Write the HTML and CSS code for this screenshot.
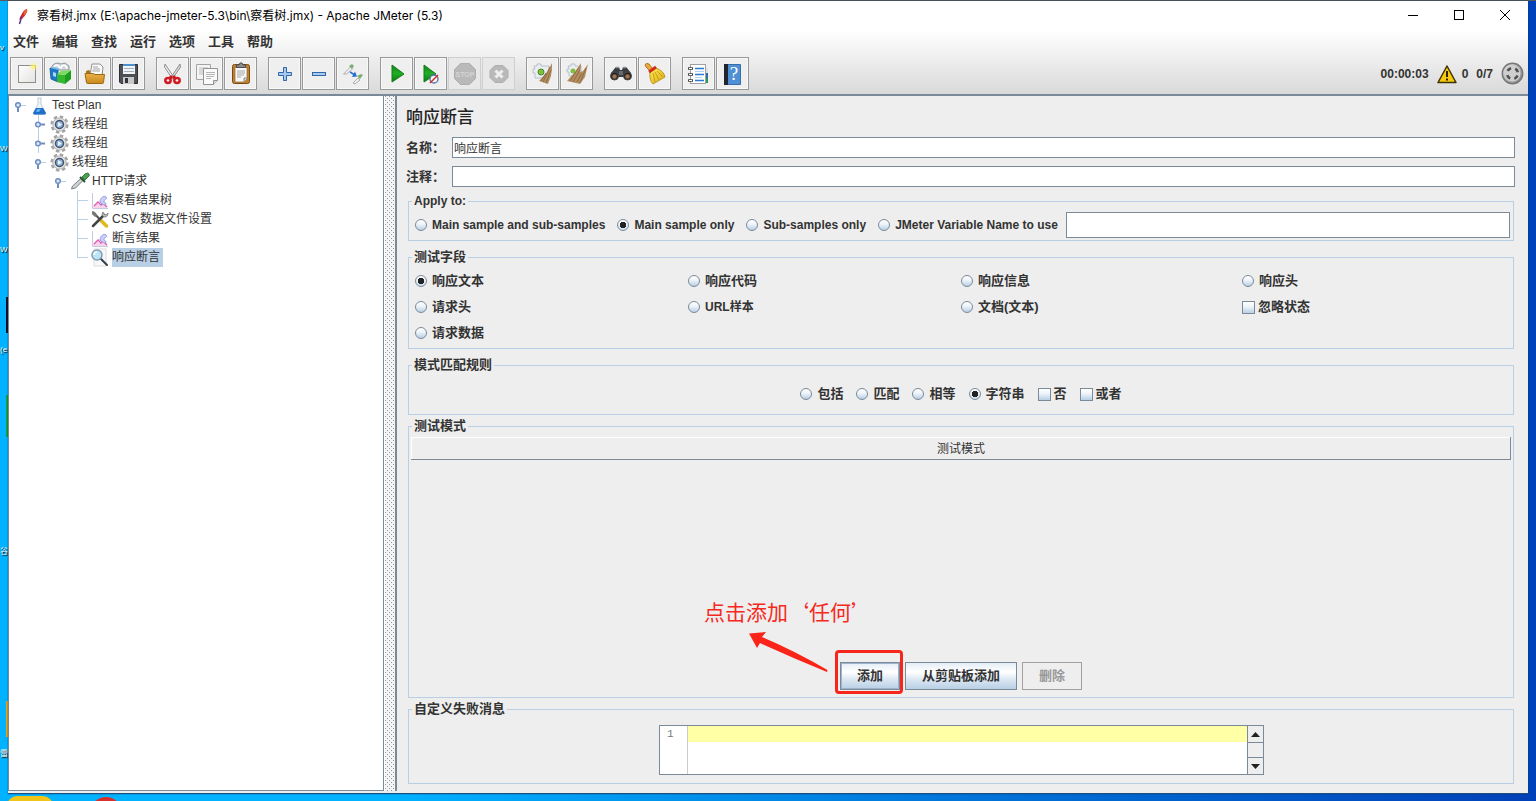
FILE: index.html
```html
<!DOCTYPE html>
<html lang="zh-CN">
<head>
<meta charset="utf-8">
<title>察看树.jmx - Apache JMeter (5.3)</title>
<link rel="stylesheet" href="styles.css">
</head>
<body>
<svg class="defs" width="0" height="0" aria-hidden="true">
  <defs>
    <linearGradient id="green" x1="0" y1="0" x2="0" y2="1"><stop offset="0" stop-color="#12871a"/><stop offset=".5" stop-color="#1fae25"/><stop offset="1" stop-color="#0b7a12"/></linearGradient>
    <linearGradient id="gold" x1="0" y1="0" x2="0" y2="1"><stop offset="0" stop-color="#eab04a"/><stop offset="1" stop-color="#c98a1c"/></linearGradient>
    <linearGradient id="paper" x1="0" y1="0" x2="1" y2="1"><stop offset="0" stop-color="#ffffff"/><stop offset="1" stop-color="#e2e2e0"/></linearGradient>
    <radialGradient id="glow"><stop offset="0" stop-color="#fff04a"/><stop offset="1" stop-color="#fff8b0" stop-opacity="0"/></radialGradient>
    <linearGradient id="broom" x1="0" y1="0" x2="1" y2="1"><stop offset="0" stop-color="#ffee55"/><stop offset="1" stop-color="#d9a514"/></linearGradient>
    <linearGradient id="steel" x1="0" y1="0" x2="1" y2="1"><stop offset="0" stop-color="#e8e8e8"/><stop offset="1" stop-color="#7d7d7d"/></linearGradient>
    <symbol id="i-open" viewBox="0 0 20 19"><path d="M8 10v6" stroke="#6f8fc4" stroke-width="2"/><path d="M10 9.500h6" stroke="#b8cfe5"/><circle cx="8" cy="9" r="2.300" fill="#dfe9f6" stroke="#6f8fc4" stroke-width="1.500"/></symbol>
    <symbol id="i-shut" viewBox="0 0 20 19"><path d="M9 9.500h6" stroke="#6f8fc4" stroke-width="2"/><circle cx="8" cy="9.500" r="2.300" fill="#dfe9f6" stroke="#6f8fc4" stroke-width="1.500"/></symbol>
    <symbol id="i-gear" viewBox="0 0 20 19">
      <circle cx="9.500" cy="9.500" r="7.800" fill="none" stroke="#a3a3a3" stroke-width="2.600" stroke-dasharray="3.500 2.626"/>
      <circle cx="9.500" cy="9.500" r="6.600" fill="#e2e2e2" stroke="#b5b5b5"/>
      <circle cx="9.500" cy="9.500" r="4" fill="#8fb2da" stroke="#40536f" stroke-width="1.500"/>
      <path d="M8 7l4 2.500-4 2.500z" fill="#e9f2fc"/>
    </symbol>
    <symbol id="i-graph" viewBox="0 0 20 19"><path d="M2.500 2v15.500H18" fill="none" stroke="#c3cbe2"/><path d="M3 17v-2l4-3 3 2 3-2 4 4v1z" fill="#f9d3ec"/><path d="M4 15l4-4 3 3 2-2 4 4" fill="none" stroke="#e05cae" stroke-width="1.300"/><path d="M10 11c0-4 4-7 6-5s-1 2-2 4 2 1 2 3-3 1-6-2z" fill="#c9d0fa" stroke="#9a9ce2"/></symbol>
    <symbol id="i-tools" viewBox="0 0 20 19"><path d="M3 2l12 13" stroke="#555" stroke-width="2"/><path d="M2 1l4 2 1 3-2 1-3-3z" fill="#777"/><path d="M11.500 11l5 5" stroke="#e0b91c" stroke-width="3.500" stroke-linecap="round"/><path d="M3 16L14 5" stroke="#444" stroke-width="2.500" stroke-linecap="round"/><path d="M13 2c-2 3 0 5 2 5s3-2 3-4l-2 2-2-1z" fill="#bbb" stroke="#666" stroke-width=".7"/></symbol>
  </defs>
</svg>

<div class="desktop" aria-hidden="true">
  <span class="peek peek-v">v</span><span class="peek peek-w1">W</span><span class="peek peek-w2">W</span>
  <span class="peek peek-ie">(e</span><span class="peek peek-gu">谷</span><span class="peek peek-lei">雷</span>
  <i class="chip chip-black"></i><i class="chip chip-green"></i><i class="chip chip-orange"></i><i class="chip chip-yellow"></i><i class="chip chip-red"></i>
</div>

<div class="window">
  <header class="titlebar">
    <svg class="app-icon" width="16" height="18" viewBox="0 0 16 18"><path d="M3.500 17l1.500-5" stroke="#55357a" stroke-width="1.500"/><path d="M4 13C4 9 7 3 11 2c1 3-3 9-7 11z" fill="#d22c33"/><path d="M11 2c1 3-1 5-3 6L7.500 5z" fill="#e8662e"/><path d="M3.500 13c0-2 .5-3 1.500-4l2 2z" fill="#8b2468"/></svg>
    <h1 class="window-title">察看树.jmx (E:\apache-jmeter-5.3\bin\察看树.jmx) - Apache JMeter (5.3)</h1>
    <button class="win-btn" aria-label="最小化"><svg width="12" height="12" viewBox="0 0 12 12"><path d="M1 5.500h10" stroke="#000"/></svg></button>
    <button class="win-btn" aria-label="最大化"><svg width="12" height="12" viewBox="0 0 12 12"><rect x="1.500" y=".5" width="9" height="9" fill="none" stroke="#000"/></svg></button>
    <button class="win-btn" aria-label="关闭"><svg width="12" height="12" viewBox="0 0 12 12"><path d="M1 0l10 10M11 0L1 10" stroke="#000"/></svg></button>
  </header>

  <div class="bars">
    <nav class="menubar">
      <button>文件</button><button>编辑</button><button>查找</button><button>运行</button><button>选项</button><button>工具</button><button>帮助</button>
    </nav>
    <div class="toolbar">
      <div class="group">
        <button aria-label="新建"><svg viewBox="0 0 31 31"><rect x="7.500" y="7.500" width="17" height="17" fill="url(#paper)" stroke="#8e8e8a"/><circle cx="22.500" cy="8.500" r="5" fill="url(#glow)"/></svg></button>
        <button aria-label="模板"><svg viewBox="0 0 31 31"><path d="M7 12V8l2-2 4-1 3 1 4-1 4 3v4z" fill="#d3dade" stroke="#8d999e"/><path d="M9 10c1-4 5-4 6 1M16 11c0-5 5-5 6 0" stroke="#fff" fill="none" stroke-width="1.500"/><path d="M5 10l8 2v12l-7-3z" fill="#1c79c8" stroke="#0e5291" stroke-width=".8"/><path d="M5 10l4-1 7 2-3 1z" fill="#6fb9ee"/><path d="M8 14l3 1v4l-3-1z" fill="#a9d8f8"/><path d="M12 16l8 1v9l-8-2z" fill="#33b830"/><path d="M20 17l6-5v9l-6 5z" fill="#1d9c20"/><path d="M12 16l4-3 10-1-6 5z" fill="#7bdc5c"/></svg></button>
        <button aria-label="打开"><svg viewBox="0 0 31 31"><path d="M7 25V13l3-1 2 2h12v11z" fill="#a9731d"/><path d="M11 17L13 6h8l3 3-1 9z" fill="#fafafa" stroke="#8f8f8f"/><path d="M14 9h5M14 11h7M13 13h8" stroke="#a5a5a5"/><path d="M6 15.500h8l2 1h9.500l-1 8q0 1-1 1h-15q-1 0-1-1z" fill="url(#gold)" stroke="#9c6a14"/></svg></button>
        <button aria-label="保存"><svg viewBox="0 0 31 31"><path d="M6.500 6.500h18v19H8l-1.500-1.500z" fill="#4d5055" stroke="#2d2f33"/><rect x="10" y="6" width="12" height="10" fill="#f2f5f8"/><path d="M10 7h12" stroke="#4e90cd" stroke-width="2"/><path d="M11 10.500h10M11 13.500h10" stroke="#a3b1bd"/><rect x="10" y="19" width="11" height="7" fill="#c9c9c9"/><rect x="12" y="20" width="3" height="5" fill="#33353a"/></svg></button>
      </div>
      <div class="group">
        <button aria-label="剪切"><svg viewBox="0 0 31 31"><path d="M8 6l9.500 14-2 1L7.500 9z" fill="#ededed" stroke="#858585" stroke-width=".9"/><path d="M23 6l-9.500 14 2 1L23.500 9z" fill="#d9d9d9" stroke="#858585" stroke-width=".9"/><path d="M15 18l-3 3M16 18l3 3" stroke="#c71c22" stroke-width="3"/><ellipse cx="11" cy="22.500" rx="2.700" ry="2.400" fill="none" stroke="#d01b22" stroke-width="2.500"/><ellipse cx="20" cy="22.500" rx="2.700" ry="2.400" fill="none" stroke="#d01b22" stroke-width="2.500"/></svg></button>
        <button aria-label="复制"><svg viewBox="0 0 31 31"><path d="M5.500 6.500h14v15h-14z" fill="#f4f4f4" stroke="#a4a4a4"/><path d="M8 10h9M8 12h9M8 14h4M8 16h4" stroke="#bdbdbd"/><path d="M12.500 10.500h14v12l-4 4h-10z" fill="#fafafa" stroke="#929292"/><path d="M15 14.500h9M15 16.500h9M15 18.500h8M15 20.500h5" stroke="#b5b5b5"/><path d="M22.500 26.500v-4h4" fill="#ddd" stroke="#929292"/></svg></button>
        <button aria-label="粘贴"><svg viewBox="0 0 31 31"><rect x="7.500" y="6.500" width="17" height="19" rx="2" fill="#c1812c" stroke="#7d4b10"/><path d="M10 9.500h12v11l-3 3.500h-9z" fill="#f8f8f8" stroke="#8b6b3b" stroke-width=".7"/><path d="M12 13h8M12 15h8M12 17h7M12 19h4" stroke="#a5a5a5"/><path d="M11.500 9.500V7h2.500l1-2h2l1 2h2.500v2.500z" fill="#8c8e91" stroke="#4d4e50"/><path d="M19 24v-4h3" fill="#ddd" stroke="#888"/></svg></button>
      </div>
      <div class="group">
        <button aria-label="展开"><svg viewBox="0 0 31 31"><path d="M14.500 9.500h3v5h5v3h-5v5h-3v-5h-5v-3h5z" fill="#a9c9ee" stroke="#2e66aa"/></svg></button>
        <button aria-label="折叠"><svg viewBox="0 0 31 31"><rect x="9.500" y="14.500" width="13" height="3" fill="#a9c9ee" stroke="#2e66aa"/></svg></button>
        <button aria-label="切换"><svg viewBox="0 0 31 31"><path d="M6.500 16l7-7 2 2-6 5z" fill="#f2f2f2" stroke="#adadad"/><path d="M12 8l3-2 2 2-2 3z" fill="#7fae74"/><path d="M16 25l5-5 2 2-5 4z" fill="#f2f2f2" stroke="#adadad"/><path d="M20 18l4-2 2 1-3 4z" fill="#7fae74"/><path d="M13 14l5 3" stroke="#246fd4" stroke-width="1.500"/><path d="M15 19l5-.5-2-5z" fill="#246fd4"/></svg></button>
      </div>
      <div class="group">
        <button aria-label="启动"><svg viewBox="0 0 31 31"><path d="M11 7l12 9-12 8z" fill="url(#green)" stroke="#157a1c"/></svg></button>
        <button aria-label="不停顿开始"><svg viewBox="0 0 31 31"><path d="M9 7l12 9-12 8z" fill="url(#green)" stroke="#157a1c"/><circle cx="19" cy="21" r="4" fill="#f6f6f6" stroke="#596f9e" stroke-width="1.300"/><path d="M15 25l8-8" stroke="#d12a22" stroke-width="1.500"/></svg></button>
        <button aria-label="停止" disabled><svg viewBox="0 0 31 31"><path d="M11.500 5.500h9l6 6v9l-6 6h-9l-6-6v-9z" fill="#b9b9b9" stroke="#aeaeae"/><text x="16" y="19" text-anchor="middle" class="stop-text">STOP</text></svg></button>
        <button aria-label="关闭" disabled><svg viewBox="0 0 31 31"><path d="M12 7.500h8l5 5v7l-5 5h-8l-5-5v-7z" fill="#b9b9b9" stroke="#aeaeae"/><path d="M12.500 12.500l7 7M19.500 12.500l-7 7" stroke="#eee" stroke-width="3"/></svg></button>
      </div>
      <div class="group">
        <button aria-label="清除"><svg viewBox="0 0 31 31"><path d="M7 8h3V6h4v2h8v12H8v-5H6v-4h2z" fill="#e9edf0" stroke="#b9c1c8"/><circle cx="14" cy="14" r="3" fill="#7dc142" stroke="#4a8a24"/><path d="M25 5l-5 9-8 9 9 3 3-8 1-7z" fill="#b48d61"/><path d="M23 9l-7 15M24 12l-5 13M19 15l-5 8" stroke="#80623e" stroke-width=".8"/></svg></button>
        <button aria-label="清除全部"><svg viewBox="0 0 31 31"><path d="M7 8h3V6h4v2h6v10H8v-4H6v-3h2z" fill="#e9edf0" stroke="#b9c1c8"/><circle cx="12" cy="13" r="2.500" fill="#7dc142"/><path d="M20 5l-6 9-8 9 13 3 5-7 3-13-5 7-3 1 1-5z" fill="#b48d61"/><path d="M18 9L9 23M19 12l-7 12M25 10l-6 15M21 15l-5 9" stroke="#80623e" stroke-width=".8"/></svg></button>
      </div>
      <div class="group">
        <button aria-label="查找"><svg viewBox="0 0 31 31"><path d="M6 15l4-5 1-1h3l1 3h2l1-3h3l1 1 4 5v4H6z" fill="#3a3d40"/><path d="M11 9.500h3M18 9.500h3" stroke="#8e9599" stroke-width="1.500"/><circle cx="9.500" cy="18" r="4" fill="#222" stroke="#4a4a4a"/><circle cx="22.500" cy="18" r="4" fill="#222" stroke="#4a4a4a"/><circle cx="9.500" cy="18.500" r="2.300" fill="#a3714b"/><circle cx="22.500" cy="18.500" r="2.300" fill="#a3714b"/><rect x="14" y="13" width="4" height="4" fill="#666b6f"/></svg></button>
        <button aria-label="重置查找"><svg viewBox="0 0 31 31"><path d="M6 7q1-3 4-1l4 5-3 2-4-4z" fill="#e8a83b" stroke="#a36a13" stroke-width=".8"/><path d="M11 14l6-4q8 3 9 9L14 26q-4-4-3-12z" fill="url(#broom)" stroke="#b08a11" stroke-width=".8"/><path d="M14 15l2 9M16 14l4 8M18 13l6 6" stroke="#c59b14" stroke-width=".9"/><path d="M10 14l7-5" stroke="#cf2a1d" stroke-width="3"/></svg></button>
      </div>
      <div class="group">
        <button aria-label="函数助手"><svg viewBox="0 0 31 31"><path d="M21 10h4v15h-4z" fill="#d9e2ea"/><path d="M22 15h3v5h-3z" fill="#376aa8"/><path d="M22 20h3v5h-3z" fill="#26994b"/><rect x="7.500" y="6.500" width="15" height="19" fill="#fdfdfd" stroke="#a0a0a0"/><path d="M12 10.500h9M12 16.500h9M12 22.500h9" stroke="#2a7bd0" stroke-width="1.500"/><path d="M12 13.500h9M12 19.500h7" stroke="#b7d1ec"/><path d="M5 10.500h5M5 16.500h5M5 22.500h5" stroke="#444" stroke-width="2.500"/><path d="M6 10.500h3M6 16.500h3M6 22.500h3" stroke="#fff"/></svg></button>
        <button aria-label="帮助"><svg viewBox="0 0 31 31"><path d="M7.500 6.500h16v20h-16z" fill="#4f8fd6" stroke="#3a6ea9"/><path d="M7 6h4v21H7z" fill="#20262e"/><text x="17" y="22" text-anchor="middle" class="help-text">?</text></svg></button>
      </div>
      <div class="status">
        <span class="time">00:00:03</span>
        <svg width="20" height="20" viewBox="0 0 20 20"><path d="M10 2L1 18.500h18z" fill="#f6c90e" stroke="#3d3203" stroke-width="1.500" stroke-linejoin="round"/><path d="M10 7v6M10 14.500v2" stroke="#2a2200" stroke-width="2"/></svg>
        <span class="errors">0</span>
        <span class="threads">0/7</span>
        <svg width="23" height="23" viewBox="0 0 23 23"><circle cx="11.500" cy="11.500" r="10.200" fill="url(#steel)" stroke="#777" stroke-width="1.500"/><circle cx="11.500" cy="11.500" r="8" fill="#cfcfcf"/><circle cx="11.500" cy="11.500" r="5.500" fill="none" stroke="#505050" stroke-width="2.600" stroke-dasharray="4.300 4.340" stroke-dashoffset="-2.200"/></svg>
      </div>
    </div>
  </div>

  <div class="body">
    <ul class="tree">
      <li class="lv0"><svg class="handle"><use href="#i-open"/></svg><svg class="icon" viewBox="0 0 20 19"><path d="M7.500 2h4M8 2v6L3.500 17q0 1.500 1.500 1.500h9q1.500 0 1.500-1.500L11 8V2" fill="#eef4fa" stroke="#c0cdd9"/><path d="M6 12h7l3 5q0 1.500-2 1.500H5q-2 0-2-1.500z" fill="#1d6fc9"/><path d="M7 13h4l-2 3H6z" fill="#64abf0"/></svg><span>Test Plan</span></li>
      <li class="lv1 trunk"><svg class="handle"><use href="#i-shut"/></svg><svg class="icon"><use href="#i-gear"/></svg><span>线程组</span></li>
      <li class="lv1 trunk"><svg class="handle"><use href="#i-shut"/></svg><svg class="icon"><use href="#i-gear"/></svg><span>线程组</span></li>
      <li class="lv1"><svg class="handle"><use href="#i-open"/></svg><svg class="icon"><use href="#i-gear"/></svg><span>线程组</span></li>
      <li class="lv2"><svg class="handle"><use href="#i-open"/></svg><svg class="icon" viewBox="0 0 20 19"><path d="M1.500 17l1-3 9-8 2 2-8 8z" fill="#cdd2d4" stroke="#7b8184"/><path d="M10 5l5 5" stroke="#25522a" stroke-width="2"/><path d="M12 5l3-3q3-2 4 0 1 2-1 3l-3 3z" fill="#4c9f55" stroke="#3a7a40"/></svg><span>HTTP请求</span></li>
      <li class="lv3"><i class="branch"></i><svg class="icon"><use href="#i-graph"/></svg><span>察看结果树</span></li>
      <li class="lv3"><i class="branch"></i><svg class="icon"><use href="#i-tools"/></svg><span>CSV 数据文件设置</span></li>
      <li class="lv3"><i class="branch"></i><svg class="icon"><use href="#i-graph"/></svg><span>断言结果</span></li>
      <li class="lv3"><i class="branch last"></i><svg class="icon" viewBox="0 0 20 19"><path d="M4 1h12v17H4z" fill="#f8f8f8" stroke="#dcdcdc"/><path d="M11 11l6 6" stroke="#34404b" stroke-width="2" stroke-linecap="round"/><circle cx="7" cy="7" r="5" fill="#bfe4f7" stroke="#7f9db3" stroke-width="1.500"/><path d="M4 7q0-3 3-3" stroke="#fff" stroke-width="1.500" fill="none"/></svg><span class="selected">响应断言</span></li>
    </ul>
    <div class="splitter"></div>

    <main class="panel">
      <h2>响应断言</h2>
      <div class="row"><label for="name">名称：</label><input id="name" type="text" value="响应断言"></div>
      <div class="row"><label for="comment">注释：</label><input id="comment" type="text"></div>

      <fieldset class="apply">
        <legend class="latin">Apply to:</legend>
        <div class="choices latin">
          <label><input type="radio" name="apply">Main sample and sub-samples</label>
          <label><input type="radio" name="apply" checked>Main sample only</label>
          <label><input type="radio" name="apply">Sub-samples only</label>
          <label><input type="radio" name="apply">JMeter Variable Name to use</label>
          <input class="variable" type="text" aria-label="JMeter Variable Name">
        </div>
      </fieldset>

      <fieldset class="fields">
        <legend>测试字段</legend>
        <div class="field-grid">
          <label><input type="radio" name="field" checked>响应文本</label>
          <label><input type="radio" name="field">响应代码</label>
          <label><input type="radio" name="field">响应信息</label>
          <label><input type="radio" name="field">响应头</label>
          <label><input type="radio" name="field">请求头</label>
          <label class="latin"><input type="radio" name="field">URL样本</label>
          <label><input type="radio" name="field">文档(文本)</label>
          <label><input type="checkbox">忽略状态</label>
          <label><input type="radio" name="field">请求数据</label>
        </div>
      </fieldset>

      <fieldset class="rules">
        <legend>模式匹配规则</legend>
        <div class="choices centered">
          <label><input type="radio" name="rule">包括</label>
          <label><input type="radio" name="rule">匹配</label>
          <label><input type="radio" name="rule">相等</label>
          <label><input type="radio" name="rule" checked>字符串</label>
          <label><input type="checkbox">否</label>
          <label><input type="checkbox">或者</label>
        </div>
      </fieldset>

      <fieldset class="patterns">
        <legend>测试模式</legend>
        <div class="patterns-inner">
          <table><thead><tr><th>测试模式</th></tr></thead></table>
          <div class="actions">
            <div class="marked">
              <button class="btn focus">添加</button>
              <div class="note">
                <span>点击添加‘任何’</span>
                <svg width="80" height="42" viewBox="0 0 80 42"><path d="M1 1.500L18 0l-4 5q33 14 65.500 33l-.5 2Q45 26 12 11l-3 5z" fill="#fb2418"/></svg>
              </div>
            </div>
            <button class="btn">从剪贴板添加</button>
            <button class="btn" disabled>删除</button>
          </div>
        </div>
      </fieldset>

      <fieldset class="message">
        <legend>自定义失败消息</legend>
        <div class="editor">
          <span class="gutter">1</span>
          <textarea aria-label="自定义失败消息"></textarea>
          <div class="scroll">
            <button aria-label="向上"><svg width="9" height="5" viewBox="0 0 9 5"><path d="M0 5l4.500-5L9 5z" fill="#222"/></svg></button>
            <i></i>
            <button aria-label="向下"><svg width="9" height="5" viewBox="0 0 9 5"><path d="M0 0l4.500 5L9 0z" fill="#222"/></svg></button>
          </div>
        </div>
      </fieldset>
    </main>
  </div>
</div>
</body>
</html>
```
FILE: styles.css
```css
* { box-sizing: border-box; }
body {
  margin: 0;
  height: 100vh;
  padding: 1px 8px 7px;
  overflow: hidden;
  position: relative;
  background: linear-gradient(90deg, #00b2ff 0, #00b2ff 25%, #0078dc 60%, #0040b8 100%);
  font-family: "Liberation Sans", "Noto Sans CJK SC", sans-serif;
  font-size: 13px;
  color: #333;
}
button, input, textarea { font: inherit; color: inherit; }
button { padding: 0; border: 0; background: none; }
.defs { position: absolute; }

.desktop { position: absolute; inset: 0; border-top: 1px solid #55585e; overflow: hidden; }
.peek { position: absolute; left: 0; font-size: 8px; line-height: 16px; color: #fff; text-shadow: 1px 1px 1px #000; }
.peek-v { top: 39px; }
.peek-w1 { top: 140px; }
.peek-w2 { top: 241px; }
.peek-ie { top: 341px; }
.peek-gu { top: 543px; }
.peek-lei { top: 745px; }
.chip { position: absolute; left: 6px; width: 2px; }
.chip-black { top: 296px; height: 36px; background: #0a1020; }
.chip-green { top: 394px; height: 42px; background: #12a336; }
.chip-orange { top: 700px; height: 36px; background: #e0a325; }
.chip-yellow { top: 795px; left: 7px; width: 46px; height: 20px; border-radius: 10px; background: #f0c419; }
.chip-red { top: 796px; left: 90px; width: 32px; height: 32px; border-radius: 50%; background: #d9302c; }

.window { position: relative; height: 100%; display: flex; flex-direction: column; background: #eee; border-bottom: 1px solid #1d4f80; box-shadow: 0 0 1px #0a2a50; }
.titlebar { display: flex; align-items: center; height: 29px; background: #fff; padding-left: 8px; flex: none; }
.window-title { flex: 1; margin: 0 0 0 5px; font: 12px/18px Inter, "Noto Sans CJK SC", sans-serif; color: #000; }
.win-btn { width: 46px; height: 29px; display: grid; place-items: center; }

.bars { flex: none; background: linear-gradient(#fff, #d9d9d9); border-bottom: 2px solid #7a8a99; }
.menubar { display: flex; gap: 13px; padding: 0 5px; height: 26px; }
.menubar button { font-weight: bold; line-height: 22px; height: 24px; }
.toolbar { display: flex; align-items: center; gap: 11px; padding: 1px 4px 4px 2px; }
.group { display: flex; gap: 1px; }
.group button { width: 33px; height: 33px; border: 1px solid #999; background: #efefef; box-shadow: inset 0 0 0 1px #f8f8f8; }
.group button:disabled { border-color: #cfcfcf; background: #e8e8e8; box-shadow: none; }
.group svg { display: block; width: 31px; height: 31px; }
.stop-text { font: bold 7px "Liberation Sans", sans-serif; fill: #d5d5d5; }
.help-text { font: 19px "Liberation Serif", serif; fill: #fff; }
.status { margin-left: auto; display: flex; align-items: center; font-size: 12px; font-weight: bold; }
.time { margin-right: 8px; }
.errors { margin-left: 5px; }
.threads { margin: 0 8px; }

.body { flex: 1; min-height: 0; display: flex; padding-bottom: 2px; }
.tree { flex: 0 0 376px; margin: 0; padding: 0 0 0 1px; list-style: none; background: #fff; border: solid #7a8a99; border-width: 0 1px 1px; font-size: 12px; }
.tree li { display: flex; align-items: center; height: 19px; }
.tree svg { width: 20px; height: 19px; flex: none; }
.tree span { margin-left: 2px; line-height: 19px; white-space: pre; }
.lv1 { padding-left: 20px; }
.lv2 { padding-left: 40px; }
.lv3 { padding-left: 60px; }
.trunk .handle { background: linear-gradient(#b8cfe5, #b8cfe5) 8px 0 / 1px 100% no-repeat; }
.branch { width: 20px; height: 19px; background: linear-gradient(#b8cfe5, #b8cfe5) 7px 0 / 1px 100% no-repeat, linear-gradient(#b8cfe5, #b8cfe5) 7px 9px / 11px 1px no-repeat; }
.branch.last { background-size: 1px 10px, 11px 1px; }
.tree .selected { background: #b8cfe5; padding-right: 3px; }

.splitter {
  flex: 0 0 13px;
  border-left: 1px solid #fff;
  border-right: 2px solid #7a8a99;
  background:
    conic-gradient(from 270deg at 1px 1px, #8b98a6 90deg, transparent 0) 0 0 / 4px 4px,
    conic-gradient(from 270deg at 1px 1px, #8b98a6 90deg, transparent 0) 2px 2px / 4px 4px,
    #f4f4f4;
}

.panel { flex: 1; min-width: 0; display: flex; flex-direction: column; padding: 9px 13px 7px 9px; }
.panel h2 { margin: 0 0 6px; font-size: 17px; font-weight: 500; line-height: 26px; color: #222; }
.row { display: flex; align-items: center; height: 21px; margin-bottom: 8px; }
.row label { flex: 0 0 46px; font-weight: bold; line-height: 16px; white-space: nowrap; }
input[type="text"] { flex: 1; min-width: 0; height: 21px; padding: 0 1px; border: 1px solid #7a8a99; background: #fff; font-size: 12px; outline: 0; border-radius: 0; }
fieldset { min-width: 0; margin: 0 1px 0 2px; padding: 0; border: 1px solid #b8cfe5; }
legend { margin-left: 3px; padding: 0 2px; font-weight: bold; line-height: 16px; height: 16px; }
.latin { font-size: 12px; }
fieldset label { display: flex; align-items: center; gap: 5px; font-weight: bold; line-height: 16px; white-space: nowrap; }
input[type="radio"], input[type="checkbox"] { appearance: none; flex: none; width: 12px; height: 12px; margin: 0; border: 1px solid #7a8a99; background: linear-gradient(#fff, #f0f5fa 40%, #b8cfe5); }
input[type="radio"] { border-radius: 50%; }
input[type="radio"]:checked { background: radial-gradient(circle, #222 0 3px, transparent 3px), linear-gradient(#fff, #cddded); }
input[type="checkbox"] { width: 13px; height: 13px; margin-right: -2px; }
.choices { display: flex; align-items: center; gap: 13px; height: 26px; }
.choices.latin { gap: 12px; }
.centered { justify-content: center; }

.apply { margin-top: -2px; margin-bottom: 8px; padding: 3px 3px 2px 6px; }
.apply legend, .fields legend { margin-left: -3px; }
.apply input[type="text"] { height: 26px; margin-left: -4px; }
.fields { margin-bottom: 8px; padding: 3px 0 2px 6px; }
.field-grid { display: grid; grid-template-columns: 273fr 273fr 281fr 271fr; grid-auto-rows: 26px; }
.rules { margin-bottom: 3px; padding: 8px 0 7px; }
.patterns { flex: 1; display: flex; flex-direction: column; margin-bottom: 3px; padding: 3px 2px 7px; }
.patterns legend { margin-left: 1px; }
.patterns-inner { flex: 1; display: flex; flex-direction: column; justify-content: space-between; }
.patterns table { width: 100%; border-collapse: collapse; }
.patterns th { height: 22px; padding: 0; border: 1px solid; border-color: #fff #7a8a99 #7a8a99 #fff; font-size: 12px; font-weight: normal; line-height: 20px; }
.actions { display: flex; justify-content: center; gap: 5px; }
.btn { height: 28px; padding: 0 16px; border: 1px solid #7a8a99; background: linear-gradient(#e4edf6, #fff 35%, #dfe9f3 60%, #b8cfe5); font-weight: bold; line-height: 16px; }
.btn.focus { box-shadow: inset 0 0 0 1px #9fb3ca; }
.btn:disabled { background: #eee; border-color: #a0a0a0; color: #999; }
.marked { position: relative; display: flex; }
.marked .btn { padding: 0 16px; }
.marked::after { content: ""; position: absolute; inset: -12px -3px -4px -5px; border: 3px solid #f5271c; border-radius: 4px; pointer-events: none; }
.note { position: absolute; right: 28px; bottom: 16px; display: grid; color: #f5291d; font-size: 21px; line-height: 28px; white-space: nowrap; font-family: "Noto Sans CJK SC", sans-serif; pointer-events: none; }
.note svg { margin: 7px 0 0 44px; }

.message { padding: 8px 0; }
.editor { display: flex; width: 605px; max-width: 100%; height: 50px; margin: 0 auto; border: 1px solid #7a8a99; background: #fff; }
.gutter { flex: 0 0 28px; padding-right: 13px; border-right: 1px solid #ccc; text-align: right; font: 11px/16px "Liberation Mono", monospace; color: #777; }
.editor textarea { flex: 1; min-width: 0; margin: 0; padding: 0; border: 0; resize: none; outline: 0; overflow: hidden; font: 13px/16px "Liberation Mono", monospace; background: linear-gradient(#ffffa5, #ffffa5) 0 0 / 100% 16px no-repeat; }
.scroll { flex: 0 0 16px; display: flex; flex-direction: column; border-left: 1px solid #7a8a99; background: #eee; }
.scroll button { height: 16px; display: grid; place-items: center; }
.scroll i { flex: 1; border: solid #7a8a99; border-width: 1px 0; }
```
